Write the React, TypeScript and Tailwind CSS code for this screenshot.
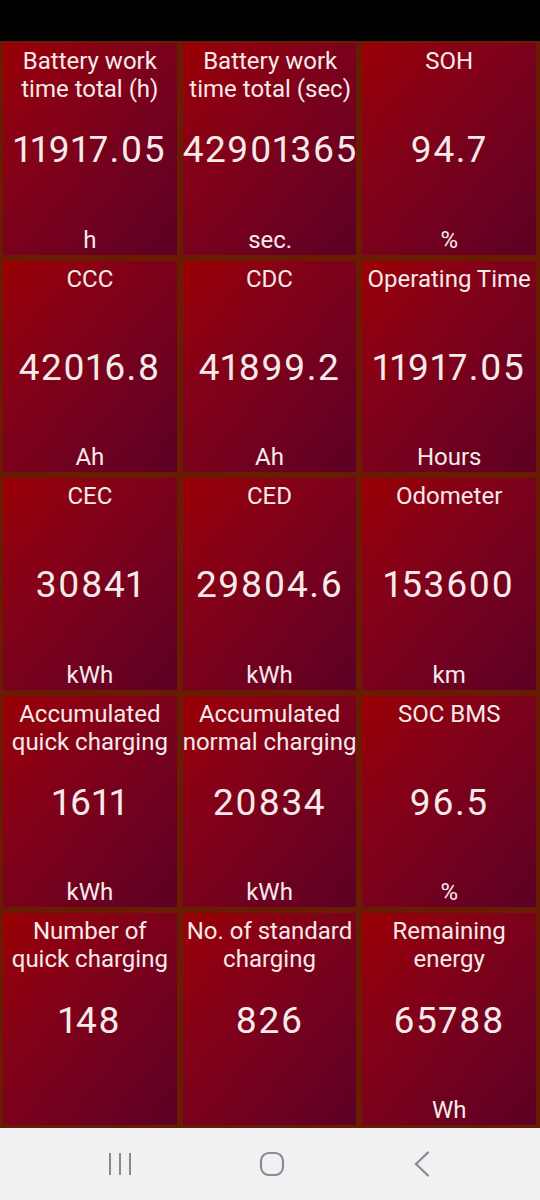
import React from "react";

type Tile = { title: string[]; value: string; unit: string };

const tiles: Tile[] = [
  { title: ["Battery work", "time total (h)"], value: "11917.05", unit: "h" },
  { title: ["Battery work", "time total (sec)"], value: "42901365", unit: "sec." },
  { title: ["SOH"], value: "94.7", unit: "%" },
  { title: ["CCC"], value: "42016.8", unit: "Ah" },
  { title: ["CDC"], value: "41899.2", unit: "Ah" },
  { title: ["Operating Time"], value: "11917.05", unit: "Hours" },
  { title: ["CEC"], value: "30841", unit: "kWh" },
  { title: ["CED"], value: "29804.6", unit: "kWh" },
  { title: ["Odometer"], value: "153600", unit: "km" },
  { title: ["Accumulated", "quick charging"], value: "1611", unit: "kWh" },
  { title: ["Accumulated", "normal charging"], value: "20834", unit: "kWh" },
  { title: ["SOC BMS"], value: "96.5", unit: "%" },
  { title: ["Number of", "quick charging"], value: "148", unit: "" },
  { title: ["No. of standard", "charging"], value: "826", unit: "" },
  { title: ["Remaining", "energy"], value: "65788", unit: "Wh" },
];

function TileView({ t }: { t: Tile }) {
  return (
    <div className="grid grid-rows-[1fr_auto_1fr] bg-gradient-to-br from-[#9a0002] to-[#5c0024] text-[#f6eaea] text-center overflow-hidden">
      <div className="self-start pt-[4px] text-[24px] leading-[28px] whitespace-nowrap">
        {t.title.map((l, i) => (
          <div key={i}>{l}</div>
        ))}
      </div>
      <div className="pt-[3px] text-[37px] leading-[42px] whitespace-nowrap proportional-nums tracking-[1.5px]">{t.value}</div>
      <div className="self-end pb-[1px] text-[24px] leading-[28px]">{t.unit}</div>
    </div>
  );
}

export default function App() {
  return (
    <div
      className="w-[540px] h-[1200px] flex flex-col bg-black overflow-hidden"
      style={{ fontFamily: "Roboto, 'Noto Sans', sans-serif" }}
    >
      <div className="h-[41px] shrink-0 bg-black" />
      <div className="h-[1087px] shrink-0 bg-[#681c02] pt-[2px] pb-[3px] pl-[3px] pr-[4px] grid grid-cols-3 grid-rows-5 gap-[6px]">
        {tiles.map((t, i) => (
          <TileView key={i} t={t} />
        ))}
      </div>
      <div className="flex-1 bg-[#f1f1f3] flex items-center justify-center">
        <div className="flex items-center justify-between w-[322px]">
          <svg width="22" height="24" viewBox="0 0 22 24" className="text-[#8b8b8f]">
            <path d="M1 1v22M11 1v22M21 1v22" stroke="currentColor" strokeWidth="2" fill="none" />
          </svg>
          <svg width="26" height="26" viewBox="0 0 26 26" className="text-[#8b8b8f]">
            <rect x="2" y="2" width="22" height="22" rx="8" stroke="currentColor" strokeWidth="2.2" fill="none" />
          </svg>
          <svg width="18" height="26" viewBox="0 0 18 26" className="text-[#8b8b8f]">
            <path d="M15 1.5L3 13l12 11.5" stroke="currentColor" strokeWidth="2.2" fill="none" strokeLinecap="round" />
          </svg>
        </div>
      </div>
    </div>
  );
}
